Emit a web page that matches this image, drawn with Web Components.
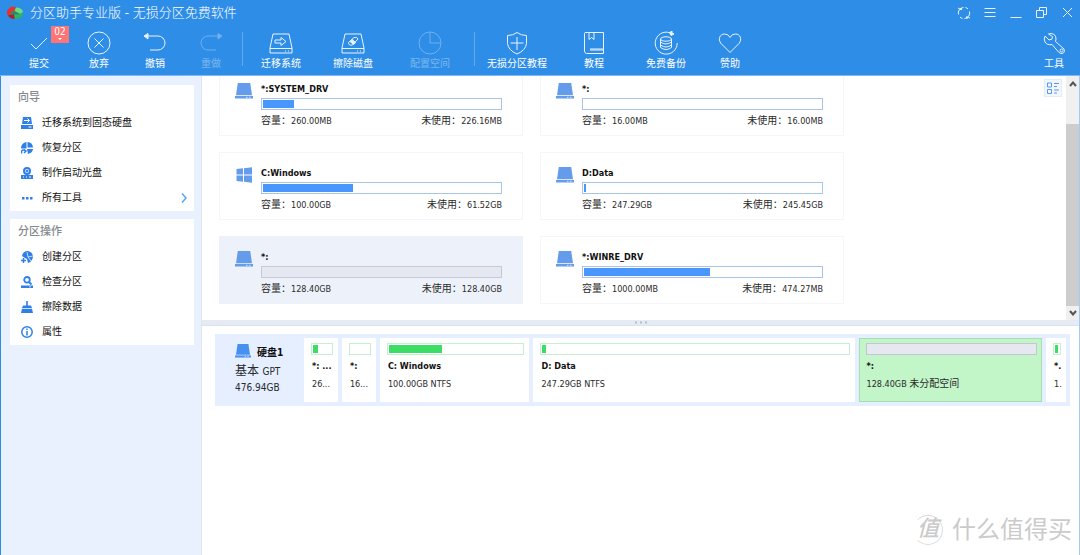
<!DOCTYPE html>
<html lang="zh-CN">
<head>
<meta charset="utf-8">
<meta name="viewport" content="width=device-width, initial-scale=1">
<title>分区助手专业版 - 无损分区免费软件</title>
<style>
  html, body { margin: 0; }
  body {
    font-family: "DejaVu Sans Condensed", "Noto Sans CJK SC", sans-serif;
    font-size: 10px;
    line-height: 12px;
    color: #2a2a2a;
    background: #fff;
  }
</style>
</head>
<body>
<partition-app></partition-app>

<script>
const ICONS = {
  logo: [18, 16, `<g stroke="none"><path d="M1 7C2 2 7 1 10 2.500L8.500 6 5 6.500 4.500 10 2 10.500Q.5 9 1 7Z" fill="#ec2f2c"/><path d="M2 10.500 8 8.500l1 5.500Q4 14 2 10.500Z" fill="#b81c22"/><path d="M10 2.500Q16 2.500 17 7l-3 2-5.500-3Z" fill="#6fdc7c"/><path d="M17 7q.5 6-8 7.500L8 9.500l6-.5Z" fill="#2bb36a"/><path d="M5 6.500 8.500 6 14 9l-6 .5-3.500.5Z" fill="#2f8a58"/></g>`],
  check: [24, 24, `<path d="M4 13l5 5L20 7" />`],
  discard: [24, 24, `<circle cx="12" cy="12" r="11"/><path d="M7.500 7.500l9 9M16.500 7.500l-9 9"/>`],
  undo: [24, 24, `<path d="M3 5h12a7 7 0 0 1 0 14H7"/><path d="M5 2.500 1 5l4 3z" fill="currentColor"/>`],
  redo: [24, 24, `<path d="M21 5H9a7 7 0 0 0 0 14h8"/><path d="M19 2.500 23 5l-4 3z" fill="currentColor"/>`],
  migrate: [24, 24, `<path d="M4 3h16l3 14v5H1v-5zM1 17.500h22"/><path d="M6 9h6V6.500l5 4-5 4V12H6z"/><path d="M16 20h1M19 20h1"/>`],
  wipe: [24, 24, `<path d="M4 3h16l3 14v5H1v-5zM1 17.500h22"/><path d="M7.500 11.500 13 6.500q3-1 4 1.500L11.500 14q-4 1-4-2.500Z"/><path d="M9 10.500l3.500 3 2-2-3.500-3z" fill="currentColor"/><path d="M16 20h1M19 20h1"/>`],
  pie: [24, 24, `<circle cx="12" cy="12" r="11"/><path d="M12 1v11h11"/>`],
  shield: [24, 24, `<path d="M12 1.500q4 3 9.500 3v8q-1 7-9.500 10.500Q3.500 19.500 2.500 12.500v-8q5.500 0 9.500-3zM12 6v13M5.500 12h13"/>`],
  book: [24, 24, `<path d="M3 1.500h18.500v21H4.500Q2.500 22 2.500 20V2.500zM7 1.500v7l2.500-2 2.500 2v-7M21.500 18H8"/><path d="M8 19h13"/>`],
  backup: [24, 24, `<path d="M18 2.800A11 11 0 1 0 23.200 12"/><path d="M15.500 1.500 18 0v2l2 1-3 1.500z" fill="currentColor"/><ellipse cx="12" cy="8" rx="5.500" ry="2.200"/><path d="M6.500 8v8.500q5.500 4 11 0V8M6.500 11q5.500 4 11 0M6.500 14q5.500 4 11 0"/>`],
  heart: [24, 24, `<path d="M12 21.500 3 12.500C-.5 8 2 3 6.500 3q4 0 5.500 3.500Q13.500 3 17.500 3C22 3 24.500 8 21 12.500z"/>`],
  wrench: [24, 24, `<path d="M9 2.500Q14 3 14 8l-.5 2.500 8.500 7.500q1.500 3.500-2 4.500-2 0-3-1l-7-8Q5 14.500 3 11 1.500 8 3 5l4 4 3-1 .5-2.500L6.500 3z"/><circle cx="19.500" cy="19.500" r="1.500"/>`],
  sync: [14, 14, `<path d="M1.500 8.500A5.500 5.500 0 0 1 6.500 1.500M12.500 5.500a5.500 5.500 0 0 1-5 7"/><path d="M3 3l-2-1M11 11l2 1"/><path d="M8.500 1.500A5.500 5.500 0 0 1 11 3M5.500 12.500A5.500 5.500 0 0 1 3 11"/><path d="M3 2h2v2H3zM9 10.500h2v2H9z" fill="currentColor" stroke="none"/>`],
  menu: [14, 14, `<path d="M1.500 2.500h11M1.500 6.500h11M1.500 10.500h11"/>`],
  min: [14, 14, `<path d="M1.500 11.500h11"/>`],
  restore: [14, 14, `<path d="M1.500 4.500h7v7h-7zM4.500 4.500v-3h7v7h-3"/>`],
  close: [14, 14, `<path d="M2 2l9 9M11 2l-9 9"/>`],
  disk: [18, 16, `<path d="M2.800 0h12.400L17 12.200H1z" fill="currentColor" stroke="none"/><path d="M0 13h18v2.500H0z" fill="currentColor" stroke="none"/><path d="M11 14.300h1.500M14 14.300h1.500" stroke="#fff" stroke-width=".7"/>`],
  windows: [18, 16, `<path d="M1.500 2 8 1.300V7.500H1.500zM9 1.200 17 .3v7.200H9zM1.500 8.500H8v6.200L1.500 14zM9 8.500h8v7.200l-8-.9z" fill="currentColor" stroke="none"/>`],
  sMigrate: [12, 12, `<path d="M2 0h8l1 7H1zM0 8h12v4H0z" fill="currentColor" stroke="none"/><path d="M3 3.500h5M6.500 1.500l2 2-2 2M7.500 10h3" stroke="#fff"/>`],
  sPie: [12, 12, `<path d="M6.500 0A6 6 0 0 1 12 5.500H6.500zM5.500 0v6.500H0Q0 1 5.500 0ZM6 7h6q-.5 4-5 5z" fill="currentColor" stroke="none"/><path d="M.5 11.500V9q2-2 4 0M3 7.500l2 1.500-2 2" stroke-width="1.500"/>`],
  sDisc: [12, 12, `<path d="M0 8h12v4H0z" fill="currentColor" stroke="none"/><circle cx="6" cy="4" r="3" stroke-width="2"/><circle cx="6" cy="4" r="1" fill="currentColor"/><path d="M2 10h1M5 10h1M8 10h2" stroke="#fff"/>`],
  sDots: [12, 12, `<path d="M1 5h2.500v2.500H1zM5 5h2.500v2.500H5zM9 5h2.500v2.500H9z" fill="currentColor" stroke="none"/>`],
  sCreate: [12, 12, `<path d="M1 5Q2 0 7 0q5 1 5 6-1 5-5 6l-1-4-2-1z" fill="currentColor" stroke="none"/><path d="M6 1l1 5 5-1M7 6l3 4" stroke="#fff" stroke-width=".7"/><path d="M0 9.500h5M2.500 7v5" stroke-width="1.500"/>`],
  sSearch: [12, 12, `<circle cx="6" cy="3.800" r="2.800" stroke-width="1.800"/><path d="M8 6l2.500 2.500" stroke-width="1.800"/><path d="M0 9.500h12V12H0z" fill="currentColor" stroke="none"/><path d="M8 10.800h2" stroke="#fff" stroke-width=".7"/>`],
  sBroom: [12, 12, `<path d="M5.200 0h1.600v4.500H10L11 7H1l1-2.500h3.200zM1 7.700h10l1 4.300H0z" fill="currentColor" stroke="none"/>`],
  sInfo: [12, 12, `<circle cx="6" cy="6" r="5.200" stroke-width="1.500"/><path d="M6 2.500v1.500M6 5v4.500" stroke-width="1.500"/>`],
  chevron: [8, 12, `<path d="M2 1.500l4 4.500-4 4.500" stroke-width="1.500"/>`],
  up: [8, 6, `<path d="M1 5l3-3.500L7 5" stroke-width="2"/>`],
  down: [8, 6, `<path d="M1 1l3 3.500L7 1" stroke-width="2"/>`],
  layout: [12, 12, `<path d="M.5 1h4v4h-4zM.5 7.500h4v4h-4zM7 1.500h5M7 4.500h3M7 8h5M7 11h3"/>`],
  drag: [12, 3, `<path d="M0 .5h2v2H0zM5 .5h2v2H5zM10 .5h2v2h-2z" fill="currentColor" stroke="none"/>`]
};

/* Base class: renders the subclass template once into an open shadow root. */
class Base extends HTMLElement {
  connectedCallback() {
    if (this.shadowRoot) return;
    this.attachShadow({ mode: 'open' }).innerHTML = this.render();
  }
  at(name, fallback = '') { return this.getAttribute(name) ?? fallback; }
}

customElements.define('ui-icon', class extends Base {
  render() {
    const [w, h, body] = ICONS[this.at('name')];
    const width = this.at('width', w);
    return `<style>:host{display:block;flex:none}svg{display:block}</style>
      <svg width="${width}" height="${Math.round(width * h / w)}" viewBox="0 0 ${w} ${h}" fill="none" stroke="currentColor" stroke-width="1" aria-hidden="true">${body}</svg>`;
  }
});

customElements.define('title-bar', class extends Base {
  render() {
    return `<style>
      :host{display:flex;align-items:center;height:25px;padding:0 5px 0 6px;gap:6px;color:#fff}
      h1{margin:0;flex:1;font-size:13px;line-height:16px;font-weight:300}
      nav{display:flex;gap:12px}
      button{all:unset;display:block;opacity:.9}
    </style>
    <ui-icon name="logo"></ui-icon><h1>分区助手专业版 - 无损分区免费软件</h1>
    <nav>${[['sync','刷新'],['menu','菜单'],['min','最小化'],['restore','还原'],['close','关闭']]
      .map(([i, l]) => `<button aria-label="${l}"><ui-icon name="${i}"></ui-icon></button>`).join('')}</nav>`;
  }
});

customElements.define('tool-button', class extends Base {
  render() {
    return `<style>
      :host{display:block;width:56px}
      :host([wide]){width:72px}
      button{all:unset;position:relative;box-sizing:border-box;display:flex;flex-direction:column;align-items:center;gap:3px;width:100%;padding-top:6px;color:#fff;white-space:nowrap}
      button:disabled{opacity:.35}
      ui-icon{opacity:.9}
      .badge{position:absolute;top:1px;right:-2px;width:18px;height:17px;background:#ff7474;font-size:10px;line-height:11px;text-align:center}
      .badge::after{content:"";display:block;width:0;margin:1px auto 0;border:2px solid transparent;border-top-color:#fff}
    </style>
    <button ${this.hasAttribute('disabled') ? 'disabled' : ''}><ui-icon name="${this.at('icon')}"></ui-icon><slot></slot>${this.hasAttribute('badge') ? `<span class="badge">${this.at('badge')}</span>` : ''}</button>`;
  }
});

customElements.define('tool-bar', class extends Base {
  render() {
    return `<style>
      :host{display:flex;height:50px;padding:0 0 0 11px;border-bottom:1px solid #7fb8f2}
      .group{display:flex}
      .group + .group{border-left:1px solid rgba(255,255,255,.25);height:34px;margin-top:7px;padding-left:2px;margin-left:3px}
      .group + .group > *{margin-top:-7px}
      .a > :first-child{margin-right:4px}
      .b > :last-child{margin-left:5px;margin-right:5px}
      .c > :first-child{margin-left:4px}
      .c > :nth-child(2){margin-left:13px}
      .c > :nth-child(3){margin-left:8px}
      .end{margin-left:auto;margin-right:-2px}
    </style>
    <div class="group a">
      <tool-button icon="check" badge="02">提交</tool-button>
      <tool-button icon="discard">放弃</tool-button>
      <tool-button icon="undo">撤销</tool-button>
      <tool-button icon="redo" disabled>重做</tool-button>
    </div>
    <div class="group b">
      <tool-button wide icon="migrate">迁移系统</tool-button>
      <tool-button wide icon="wipe">擦除磁盘</tool-button>
      <tool-button wide icon="pie" disabled>配置空间</tool-button>
    </div>
    <div class="group c">
      <tool-button wide icon="shield">无损分区教程</tool-button>
      <tool-button icon="book">教程</tool-button>
      <tool-button wide icon="backup">免费备份</tool-button>
      <tool-button icon="heart">赞助</tool-button>
    </div>
    <tool-button class="end" icon="wrench">工具</tool-button>`;
  }
});

customElements.define('side-panel', class extends Base {
  render() {
    return `<style>
      :host{display:block;background:#fff;padding-bottom:1px}
      h2{margin:0;padding-left:8px;font-size:11px;line-height:25px;font-weight:500;color:#85898e}
    </style><h2>${this.at('heading')}</h2><slot></slot>`;
  }
});

customElements.define('side-item', class extends Base {
  render() {
    return `<style>
      :host{display:block}
      button{all:unset;box-sizing:border-box;width:100%;display:flex;align-items:center;gap:9px;height:25px;padding:0 6px 0 11px;color:#111}
      .label{flex:1}
      ui-icon{color:#2f7fe8}
      ui-icon.more{color:#58a5f5}
    </style>
    <button><ui-icon name="${this.at('icon')}"></ui-icon><span class="label"><slot></slot></span>${this.hasAttribute('more') ? '<ui-icon class="more" name="chevron"></ui-icon>' : ''}</button>`;
  }
});

customElements.define('usage-bar', class extends Base {
  render() {
    return `<style>
      :host{display:block;box-sizing:border-box;height:12px;padding:1px;border:1px solid var(--edge,#a9c4ec);background:var(--track,#fff)}
      div{height:100%;width:${this.at('value', '0')}%;background:var(--fill,#4a96ff)}
    </style><div role="meter" aria-label="已使用" aria-valuenow="${this.at('value', '0')}"></div>`;
  }
});

customElements.define('volume-card', class extends Base {
  render() {
    return `<style>
      :host{display:flex;gap:8px;box-sizing:border-box;height:68px;padding:14px 20px 0 15px;border:1px solid #f4f6fa}
      :host([selected]){background:#edf2fa;border-color:#edf2fa;--edge:#c6cad6;--track:#e5e8f0}
      ui-icon{color:#649ceb}
      .body{flex:1}
      h3{margin:0 0 3px;font-size:9px;line-height:12px;color:#111}
      .row{display:flex;justify-content:space-between;margin-top:5px;font-size:9px}
      .zh{font-size:10px}
    </style>
    <ui-icon name="${this.at('icon', 'disk')}"></ui-icon>
    <div class="body"><h3>${this.at('label')}</h3><usage-bar value="${this.at('used', '0')}"></usage-bar>
    <div class="row"><span><span class="zh">容量：</span>${this.at('size')}</span><span><span class="zh">未使用：</span>${this.at('free')}</span></div></div>`;
  }
});

customElements.define('scroll-rail', class extends Base {
  render() {
    return `<style>
      :host{display:grid;grid-template-rows:15px 33fr 182fr 14px;width:13px;background:#f0f0f0;color:#555}
      button{all:unset;display:grid;place-items:center}
      .thumb{grid-row:3;background:#cdcdcd}
      .down{grid-row:4}
    </style>
    <button aria-label="向上滚动"><ui-icon name="up"></ui-icon></button><div class="thumb"></div>
    <button class="down" aria-label="向下滚动"><ui-icon name="down"></ui-icon></button>`;
  }
});

customElements.define('volume-list', class extends Base {
  render() {
    return `<style>
      :host{display:flex;min-height:0;overflow:hidden}
      .cards{flex:1;display:grid;grid-template-columns:repeat(auto-fill,304px);gap:16px 17px;align-content:end;padding:0 0 16px 17px}
      .view{all:unset;box-sizing:border-box;display:grid;place-items:center;width:18px;height:18px;margin:3px 4px 0 0;border:1px solid #e3ebf6;background:#f2f7fd;color:#5b97ea}
    </style>
    <div class="cards"><slot></slot></div>
    <button class="view" aria-label="切换视图"><ui-icon name="layout"></ui-icon></button>
    <scroll-rail></scroll-rail>`;
  }
});

/* The weight is the share of the free width; the horizontal padding comes on top of it. */
customElements.define('disk-segment', class extends Base {
  render() {
    return `<style>
      :host{display:block;box-sizing:border-box;flex:${this.at('weight')} 1 0;min-width:0;height:64px;padding:5px 5px 0 7px;background:#fff;overflow:hidden;white-space:nowrap;--edge:#c5efcf;--fill:#3bdd64}
      :host([selected]){background:#c2f5c8;box-shadow:inset 0 0 0 1px #a5dfae;--edge:#c3c8d0;--track:#e5e8f0}
      h4{margin:5px 0 6px 1px;font-size:9px;line-height:12px;color:#111}
      p{margin:0 0 0 1px;font-size:9px;line-height:12px}
      ::slotted(span){font-size:10px}
    </style>
    <usage-bar value="${this.at('used', '0')}"></usage-bar><h4>${this.at('label')}</h4><p><slot></slot></p>`;
  }
});

customElements.define('disk-row', class extends Base {
  render() {
    return `<style>
      :host{display:flex;gap:4px;box-sizing:border-box;margin:8px 9px 0 13px;padding:4px;background:#e5efff}
      .info{flex:none;width:81px;padding:6px 0 0 16px;box-sizing:border-box}
      .name{display:flex;gap:6px;align-items:flex-end;color:#111}
      ui-icon{color:#4790f0;margin-bottom:1px}
      b{line-height:12px;font-size:10px}
      .kind{font-size:12px;line-height:16px;margin-top:4px}
      small,.total{font-size:10px;line-height:16px}
    </style>
    <div class="info"><div class="name"><ui-icon name="disk" width="16"></ui-icon><b>硬盘1</b></div>
    <div class="kind">基本 <small>GPT</small></div><div class="total">476.94GB</div></div><slot></slot>`;
  }
});

customElements.define('site-mark', class extends Base {
  render() {
    return `<style>
      :host{position:absolute;right:8px;bottom:10px;display:flex;align-items:center;gap:9px;color:#cbcbcb;font-size:24px;line-height:30px;pointer-events:none}
      i{box-sizing:border-box;width:30px;height:30px;border:1px solid #dcdcdc;border-left-color:transparent;border-radius:50%;text-align:center;line-height:26px;font-size:22px;font-weight:500}
    </style><i>值</i><span>什么值得买</span>`;
  }
});

customElements.define('partition-app', class extends Base {
  render() {
    return `<style>
      :host{position:relative;display:grid;grid-template-rows:auto 1fr;min-height:100vh;box-sizing:border-box}
      header{background:#2e8de7}
      .work{display:grid;grid-template-columns:201px minmax(0,1fr);border-left:1px solid #2e8de7;border-right:1px solid #a6c9ee}
      aside{display:flex;flex-direction:column;gap:8px;padding:9px 7px 9px 9px;background:#e9f1fe;border-right:1px solid #dfe6f0}
      main{display:grid;grid-template-rows:244px auto 1fr;min-width:0}
      .split{display:grid;place-items:center;height:6px;background:#e5eaf3;border-bottom:1px solid #d9e4f2;color:#b3bccb;box-sizing:border-box}
    </style>
    <header><title-bar></title-bar><tool-bar></tool-bar></header>
    <div class="work">
      <aside>
        <side-panel heading="向导">
          <side-item icon="sMigrate">迁移系统到固态硬盘</side-item>
          <side-item icon="sPie">恢复分区</side-item>
          <side-item icon="sDisc">制作启动光盘</side-item>
          <side-item icon="sDots" more>所有工具</side-item>
        </side-panel>
        <side-panel heading="分区操作">
          <side-item icon="sCreate">创建分区</side-item>
          <side-item icon="sSearch">检查分区</side-item>
          <side-item icon="sBroom">擦除数据</side-item>
          <side-item icon="sInfo">属性</side-item>
        </side-panel>
      </aside>
      <main>
        <volume-list>
          <volume-card label="*:SYSTEM_DRV" size="260.00MB" free="226.16MB" used="13"></volume-card>
          <volume-card label="*:" size="16.00MB" free="16.00MB"></volume-card>
          <volume-card icon="windows" label="C:Windows" size="100.00GB" free="61.52GB" used="38"></volume-card>
          <volume-card label="D:Data" size="247.29GB" free="245.45GB" used="1"></volume-card>
          <volume-card selected label="*:" size="128.40GB" free="128.40GB"></volume-card>
          <volume-card label="*:WINRE_DRV" size="1000.00MB" free="474.27MB" used="53"></volume-card>
        </volume-list>
        <div class="split"><ui-icon name="drag"></ui-icon></div>
        <section>
          <disk-row>
            <disk-segment weight="22" label="*: ..." used="27">26...</disk-segment>
            <disk-segment weight="22" label="*:">16...</disk-segment>
            <disk-segment weight="138" label="C: Windows" used="40">100.00GB NTFS</disk-segment>
            <disk-segment weight="310" label="D: Data" used="1">247.29GB NTFS</disk-segment>
            <disk-segment weight="172" selected label="*:">128.40GB <span>未分配空间</span></disk-segment>
            <disk-segment weight="8" label="*." used="70">1.</disk-segment>
          </disk-row>
        </section>
      </main>
    </div>
    <site-mark></site-mark>`;
  }
});
</script>
</body>
</html>
